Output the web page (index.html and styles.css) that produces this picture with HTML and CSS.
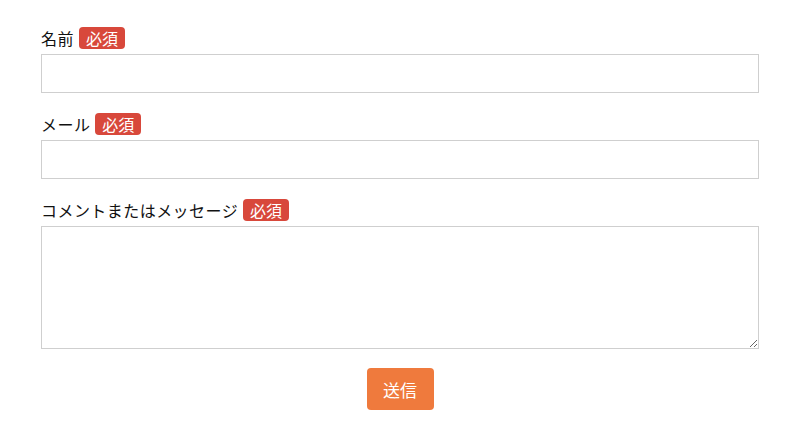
FILE: index.html
```html
<!DOCTYPE html>
<html lang="ja">
<head>
  <meta charset="utf-8">
  <title>お問い合わせ</title>
  <link rel="stylesheet" href="styles.css">
</head>
<body>
  <form class="contact-form">
    <div class="field">
      <label for="name">名前 <span class="required">必須</span></label>
      <input type="text" id="name" name="name">
    </div>
    <div class="field">
      <label for="email">メール <span class="required">必須</span></label>
      <input type="email" id="email" name="email">
    </div>
    <div class="field">
      <label for="message">コメントまたはメッセージ <span class="required">必須</span></label>
      <textarea id="message" name="message"></textarea>
    </div>
    <div class="actions">
      <button type="submit">送信</button>
    </div>
  </form>
</body>
</html>
```

FILE: styles.css
```css
body {
  font-family: "Noto Sans CJK JP", "Noto Sans", sans-serif;
  margin: 0;
  padding: 0;
  background-color: #fff;
  color: #111;
}

.contact-form {
  width: 718px;
  margin: 0 auto;
  padding-top: 26px;
}

.field {
  margin-bottom: 19px;
}

label {
  display: flex;
  align-items: center;
  gap: 5px;
  height: 23px;
  margin-bottom: 5px;
  font-size: 16px;
  letter-spacing: 0.45px;
}

.required {
  display: inline-block;
  padding: 0 7px;
  height: 22px;
  line-height: 22px;
  background-color: #d8483b;
  color: #fff;
  border-radius: 4px;
  font-size: 16px;
  letter-spacing: 0;
}

input[type="text"],
input[type="email"],
textarea {
  display: block;
  width: 100%;
  height: 39px;
  padding: 6px 10px;
  border: 1px solid #cfcfcf;
  border-radius: 0;
  box-sizing: border-box;
  font-size: 14px;
  font-family: inherit;
}

textarea {
  height: 123px;
  resize: vertical;
}

.field:last-of-type {
  margin-bottom: 21px;
}

.actions {
  display: flex;
  justify-content: center;
}

button[type="submit"] {
  width: 67px;
  height: 42px;
  background-color: #ef7a3d;
  color: #fff;
  border: none;
  border-radius: 4px;
  font-size: 17px;
  font-family: inherit;
  cursor: pointer;
}
```
